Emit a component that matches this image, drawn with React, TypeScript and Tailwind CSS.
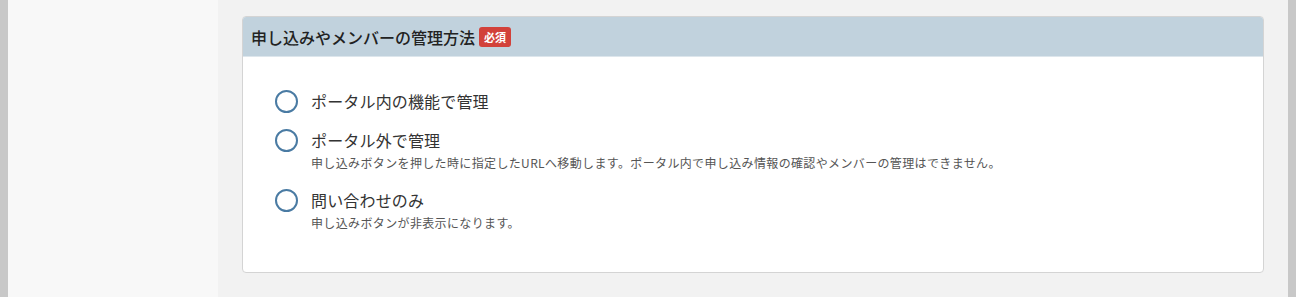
import React from "react";

const font = { fontFamily: '"Noto Sans CJK JP", "Noto Sans", sans-serif' };

function Radio({ label, desc, className }: { label: string; desc?: string; className?: string }) {
  return (
    <div className={"flex items-start gap-[13px] " + (className ?? "")}>
      <span className="mt-[1px] ml-[1px] h-[23px] w-[23px] shrink-0 rounded-full border-2 border-[#4a7ba3] bg-white" />
      <div className="flex flex-col">
        <span className="text-[16px] leading-[24px] tracking-[0.01em] text-[#333]">{label}</span>
        {desc && <span className="mt-[3px] text-[12px] leading-[16px] tracking-[0.03em] text-[#555]">{desc}</span>}
      </div>
    </div>
  );
}

export default function App() {
  return (
    <div className="flex h-[297px] w-[1296px] overflow-hidden bg-[#f2f2f2]" style={font}>
      <div className="w-[8px] shrink-0 bg-[#c8c8c8]" />
      <div className="w-[210px] shrink-0 bg-[#f8f8f8]" />
      <div className="flex-1 px-[24px] pt-[16px]">
        <div className="overflow-hidden rounded-[4px] border border-[#d4d4d4] bg-white">
          <div className="flex h-[40px] items-center gap-[4px] border-b border-[#dde6ec] bg-[#c1d2dd] px-[8px]">
            <span className="text-[16px] font-medium text-[#222]">申し込みやメンバーの管理方法</span>
            <span className="rounded-[3px] bg-[#d2413a] px-[5px] text-[11px] font-bold leading-[20px] text-white">必須</span>
          </div>
          <div className="flex flex-col px-[31px] pb-[41px] pt-[32px]">
            <Radio label="ポータル内の機能で管理" />
            <Radio className="mt-[15px]" label="ポータル外で管理" desc="申し込みボタンを押した時に指定したURLへ移動します。ポータル内で申し込み情報の確認やメンバーの管理はできません。" />
            <Radio className="mt-[17px]" label="問い合わせのみ" desc="申し込みボタンが非表示になります。" />
          </div>
        </div>
      </div>
      <div className="w-[8px] shrink-0 bg-[#c8c8c8]" />
    </div>
  );
}
